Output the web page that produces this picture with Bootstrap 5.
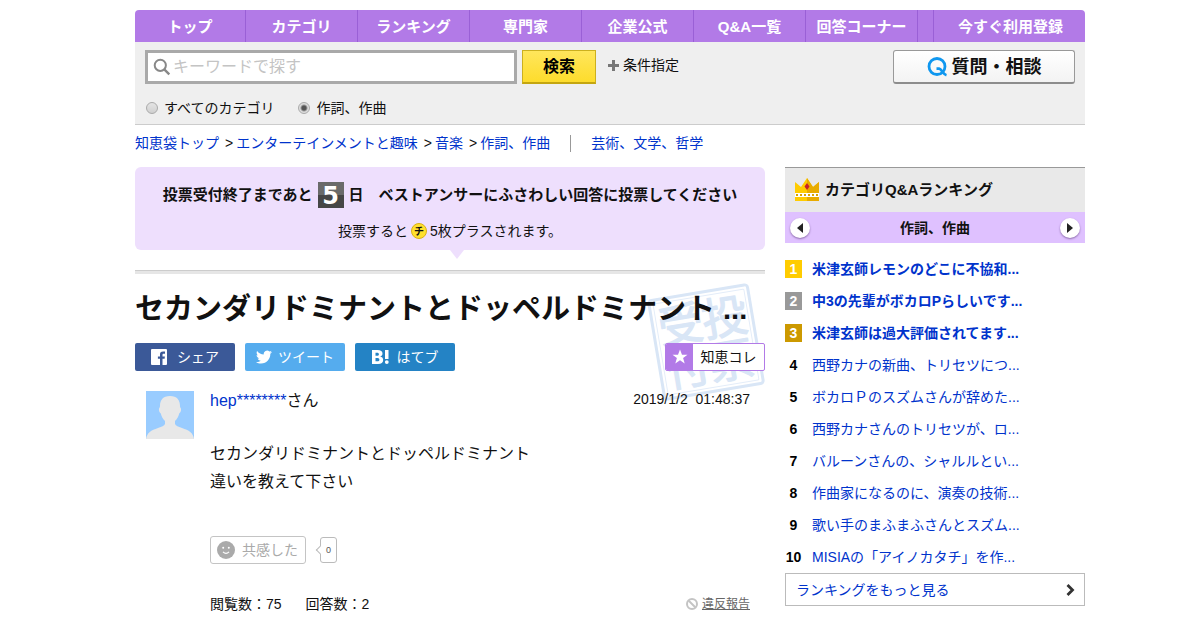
<!DOCTYPE html>
<html lang="ja">
<head>
<meta charset="utf-8">
<meta name="viewport" content="width=device-width, initial-scale=1">
<title>セカンダリドミナントとドッペルドミナント ... - 知恵袋</title>
<link href="https://cdn.jsdelivr.net/npm/bootstrap@5.3.0/dist/css/bootstrap.min.css" rel="stylesheet">
<style>
body{font-family:"Liberation Sans","Noto Sans CJK JP",sans-serif;font-size:14px;line-height:20px;color:#111;background:#fff;padding-left:20px}
a{color:#0033cc;text-decoration:none}
a:hover{text-decoration:underline}
.page-wrap{max-width:950px;padding-top:10px}
.top-nav{background:#b27ae7;border-radius:4px 4px 0 0;height:32px;font-size:15px;font-weight:700}
.top-nav a{color:#fff;line-height:34px;text-align:center;white-space:nowrap}
.nav-cell{flex:0 0 112px;border-right:1px solid #9a60d6}
.nav-cell:first-child{flex-basis:111px}
.nav-signup{flex:0 0 152px;border-left:1px solid #9a60d6;padding-left:2px}
.search-zone{background:#efefef;border-bottom:1px solid #ccc;padding:8px 10px;height:83px}
.search-box{flex:0 1 372px;height:34px;background:#fff;border:3px solid #a9a9a9;padding:0 5px}
.search-box svg{margin-right:2px}
.search-box input{border:0;outline:0;background:none;font-size:16px;line-height:24px;padding:0;min-width:0}
.search-box input::placeholder{color:#c4c4c4}
.btn-find{width:74px;height:34px;margin-left:5px;background:linear-gradient(#ffe65c,#fddc2c);border:1px solid #ccb01e;border-bottom:2px solid #c4a610;font-size:16px;font-weight:700;color:#000}
.btn-ask{width:182px;height:34px;background:linear-gradient(#fff,#f3f3f3);border:1px solid #999;border-bottom:2px solid #8c8c8c;border-radius:3px;font-size:18px;font-weight:700;color:#111;line-height:24px}
.scope{gap:24px;margin-top:14px;padding-left:1px}
.scope label{gap:6px}
.scope input{appearance:none;width:12px;height:12px;margin:0;border:1px solid #aaa;border-radius:50%;background:linear-gradient(#e4e4e4,#d0d0d0)}
.scope input:checked{background:radial-gradient(circle,#555 0 2px,#ddd 4px)}
.crumbs{padding:8px 0 14px}
.crumbs .sep{margin:0 3px 0 6px}
.crumbs .bar{width:1px;height:17px;background:#999;margin:0 20px}
.col-side{flex:0 0 300px}
.notice{background:#eedffd;border-radius:6px;height:83px;padding-top:15px}
.notice::after{content:"";position:absolute;left:50%;bottom:-9px;border:7px solid transparent;border-top:9px solid #eedffd;border-bottom:0}
.notice-main{font-size:15px;font-weight:700;height:26px;margin-bottom:13px}
.days{width:26px;height:26px;margin:0 5px;background:linear-gradient(#6a6a6a 50%,#464646 50%);color:#fff;font:700 24px/28px "DejaVu Sans",sans-serif;text-align:center}
.coin{width:16px;height:16px;margin:0 3px;border-radius:50%;background:#ffe02e;border:1px solid #d9b016;font-size:10px;line-height:15px;font-weight:700;text-align:center}
.question{border-top:1px solid #ccc;margin-top:20px}
.question::before{content:"";display:block;height:3px;background:#e6e6e6}
.stamp{position:absolute;right:0;top:11px}
.question h1{font-size:29px;line-height:40px;font-weight:700;margin:15px 0 14px;white-space:nowrap}
.share-btn{width:100px;height:28px;border-radius:2px;color:#fff;gap:10px}
.sh-f{background:#3b5998}.sh-t{background:#55acee;gap:6px}.sh-h{background:#2483c5;gap:8px}
.btn-kore{width:100px;height:28px;padding:0;border:1px solid #b27ae7;background:#fff;border-radius:2px;overflow:hidden;color:#111}
.btn-kore .star{width:27px;height:28px;background:#b27ae7}
.asker{padding:20px 15px 0 11px;gap:16px}
.user-name{font-size:16px}
.q-body{font-size:16px;line-height:28px;margin:29px 0 40px}
.btn-feel{width:96px;height:28px;border:1px solid #c4c4c4;border-radius:3px;background:#fff;color:#aaa;padding:0 6px;gap:7px}
.feel-count{width:17px;height:26px;margin-left:14px;border:1px solid #bbb;border-radius:3px;font-size:9px;color:#555}
.feel-count::before{content:"";position:absolute;left:-4px;top:9px;width:6px;height:6px;background:#fff;border:1px solid #bbb;border-width:0 0 1px 1px;transform:rotate(45deg)}
.stats{margin-top:30px}
.report{font-size:12px;color:#666;text-decoration:underline}
.rank-head{background:#e9e9e9;border-top:1px solid #999;height:45px;padding:0 9px;font-size:15px;line-height:20px;font-weight:700;gap:5px;margin:0}
.rank-cat{background:#dfc1ff;height:31px;padding:0 5px;font-weight:700}
.round-btn{width:20px;height:20px;padding:0;border:0;border-radius:50%;background:#fff;box-shadow:0 1px 2px #8a6aaa}
.rank-list{margin:10px 0 0}
.rank-list li{height:32px;gap:10px;white-space:nowrap}
.num{width:17px;height:18px;line-height:18px;text-align:center;font-weight:700;color:#000;flex:none}
.top3{font-weight:700}
.top3 .num{color:#fff}
.n1{background:#fc0}.n2{background:#999}.n3{background:#c90}
.more{border:1px solid #bbb;height:33px;padding:0 9px 0 10px}
</style>
</head>
<body>
<div class="page-wrap mx-auto">
  <nav class="top-nav d-flex">
    <a class="nav-cell" href="#">トップ</a>
    <a class="nav-cell" href="#">カテゴリ</a>
    <a class="nav-cell" href="#">ランキング</a>
    <a class="nav-cell" href="#">専門家</a>
    <a class="nav-cell" href="#">企業公式</a>
    <a class="nav-cell" href="#">Q&amp;A一覧</a>
    <a class="nav-cell" href="#">回答コーナー</a>
    <a class="nav-signup ms-auto" href="#">今すぐ利用登録</a>
  </nav>
  <form class="search-zone" onsubmit="return false">
    <div class="d-flex align-items-center">
      <label class="search-box d-flex align-items-center">
        <svg class="flex-shrink-0" width="18" height="18" viewBox="0 0 18 18" fill="none" stroke="#888"><circle cx="7.3" cy="7.3" r="5.6" stroke-width="2"/><path d="M11.3 11.3l5 5" stroke-width="2.4"/></svg>
        <input class="flex-grow-1" type="text" placeholder="キーワードで探す" aria-label="キーワード">
      </label>
      <button class="btn-find p-0" type="submit">検索</button>
      <a class="d-flex align-items-center text-reset ms-2 ps-1 pb-1" href="#"><svg class="me-1" width="11" height="11" viewBox="0 0 11 11"><path d="M4 0h3v4h4v3H7v4H4V7H0V4h4z" fill="#777"/></svg>条件指定</a>
      <button class="btn-ask ms-auto p-0 d-flex align-items-center justify-content-center" type="button"><svg class="me-1" width="21" height="20" viewBox="0 0 21 20" fill="none" stroke="#0f97ef"><circle cx="10" cy="9.500" r="8" stroke-width="2.800"/><path d="M9.500 11.600h2.500c3 .8 3.600 5.500 7.500 6.600" stroke-width="2.600"/></svg>質問・相談</button>
    </div>
    <div class="scope d-flex">
      <label class="d-flex align-items-center"><input type="radio" name="scope">すべてのカテゴリ</label>
      <label class="d-flex align-items-center"><input type="radio" name="scope" checked>作詞、作曲</label>
    </div>
  </form>
  <nav class="crumbs d-flex align-items-center">
    <a href="#">知恵袋トップ</a><span class="sep">&gt;</span><a href="#">エンターテインメントと趣味</a><span class="sep">&gt;</span><a href="#">音楽</a><span class="sep">&gt;</span><a href="#">作詞、作曲</a>
    <span class="bar"></span><a href="#">芸術、文学、哲学</a>
  </nav>
  <div class="d-flex" style="gap:20px">
    <main class="flex-grow-1">
      <section class="notice position-relative">
        <div class="notice-main d-flex justify-content-center align-items-center"><span>投票受付終了まであと</span><span class="days">5</span><span>日　ベストアンサーにふさわしい回答に投票してください</span></div>
        <div class="d-flex justify-content-center align-items-center"><span>投票すると</span><span class="coin">チ</span><span>5枚プラスされます。</span></div>
      </section>
      <article class="question position-relative">
        <svg class="stamp" width="120" height="120" viewBox="0 0 120 120">
          <g transform="rotate(-9.5 61 60)">
            <rect x="11" y="10" width="100" height="100" rx="3" fill="none" stroke="#d9e6f6" stroke-width="3"/>
            <rect x="15" y="14" width="92" height="92" rx="1" fill="none" stroke="#e4edf9" stroke-width="1"/>
            <g fill="#d9e6f6" stroke="#d9e6f6" stroke-width="1.200" stroke-linejoin="round" font-size="45" text-anchor="middle">
              <text x="39" y="55">受</text><text x="83" y="55">投</text><text x="39" y="99">付</text><text x="83" y="99">票</text>
            </g>
          </g>
        </svg>
        <h1 class="position-relative">セカンダリドミナントとドッペルドミナント ...</h1>
        <div class="d-flex position-relative" style="gap:10px">
          <a class="share-btn sh-f d-flex align-items-center justify-content-center" href="#"><svg width="16" height="16" viewBox="0 0 16 16"><path fill="#fff" d="M1 0h14q1 0 1 1v14q0 1-1 1h-3.500V9.800h2.100l.3-2.400h-2.400V5.900c0-.7.2-1.200 1.200-1.200H14V2.500l-1.900-.1C9.800 2.400 9 3.600 9 5.600v1.800H6.900v2.400H9V16H1q-1 0-1-1V1q0-1 1-1z"/></svg>シェア</a>
          <a class="share-btn sh-t d-flex align-items-center justify-content-center" href="#"><svg width="16" height="14" viewBox="0 0 16 13"><path fill="#fff" d="M5 13c6 0 9.300-5 9.300-9.300V3.300c.7-.5 1.200-1 1.700-1.700-.6.300-1.200.400-1.900.5.700-.4 1.200-1 1.400-1.800-.6.400-1.300.600-2.100.8A3.300 3.300 0 0 0 7.800 4.100C5.100 4 2.700 2.700 1.100.6.200 2.100.700 4 2.100 5c-.5 0-1-.2-1.500-.4 0 1.600 1.100 2.900 2.600 3.200-.5.200-1 .2-1.500.1.400 1.300 1.600 2.200 3.100 2.300C3.500 11.200 1.900 11.700 0 11.500 1.500 12.500 3.200 13 5 13z"/></svg>ツイート</a>
          <a class="share-btn sh-h d-flex align-items-center justify-content-center" href="#"><svg width="17" height="14" viewBox="0 0 17 14" fill="#fff"><path fill-rule="evenodd" d="M0 0h5.500c3.300 0 5 1.200 5 3.600 0 1.700-1 2.700-2.500 3 2 .3 3.200 1.500 3.200 3.500C11.200 12.700 9.300 14 6 14H0zM3.500 2.700v3h1.300c1.400 0 2.100-.5 2.100-1.500s-.7-1.500-2-1.500zM3.500 8v3.300h1.600c1.500 0 2.300-.5 2.300-1.600S6.600 8 5.100 8z"/><path d="M13 0h3.500v9H13z"/><circle cx="14.800" cy="12.100" r="1.900"/></svg>はてブ</a>
          <button class="btn-kore d-flex align-items-center ms-auto" type="button"><span class="star d-flex align-items-center justify-content-center"><svg width="16" height="16" viewBox="0 0 16 16"><path fill="#fff" d="M8 .5l2 5.200h5.500l-4.400 3.400 1.600 5.400L8 11.300l-4.700 3.200 1.600-5.400L.5 5.700H6z"/></svg></span><span class="flex-grow-1 text-center">知恵コレ</span></button>
        </div>
        <div class="asker d-flex position-relative">
          <svg class="flex-shrink-0" width="48" height="48" viewBox="0 0 48 48"><path fill="#9cf" d="M0 0h48v48H0z"/><path fill="#e8e8e8" d="M24 5c7 0 10 4 10 10 0 2 1.500 2 1 4.500-.4 2-1.300 2.500-1.800 3-.7 3-2.200 5.500-4.200 7.500v3c1 2 3 2.500 7 4 7 2.500 11 4.500 12 11H0c1-6.500 5-8.500 12-11 4-1.500 6-2 7-4v-3c-2-2-3.500-4.500-4.200-7.500-.5-.5-1.400-1-1.800-3-.5-2.500 1-2.500 1-4.500C14 9 17 5 24 5z"/></svg>
          <div class="flex-grow-1">
            <div class="d-flex justify-content-between">
              <span class="user-name"><a href="#">hep********</a>さん</span>
              <time style="line-height:16px">2019/1/2&nbsp; 01:48:37</time>
            </div>
            <p class="q-body">セカンダリドミナントとドッペルドミナント<br>違いを教えて下さい</p>
            <div class="d-flex align-items-center">
              <button class="btn-feel d-flex align-items-center" type="button"><svg width="18" height="18" viewBox="0 0 18 18"><circle cx="9" cy="9" r="9" fill="#aaa"/><path d="M6 10.800q3 3 6 0" fill="none" stroke="#fff" stroke-width="1.200"/><circle cx="6.200" cy="6.800" r="1" fill="#fff"/><circle cx="11.800" cy="6.800" r="1" fill="#fff"/></svg>共感した</button>
              <span class="feel-count position-relative d-flex align-items-center justify-content-center">0</span>
            </div>
            <div class="stats d-flex align-items-center">
              <span class="me-4">閲覧数：75</span><span>回答数：2</span>
              <span class="ms-auto d-flex align-items-center"><svg class="me-1" width="12" height="12" viewBox="0 0 12 12" fill="none" stroke="#c4c4c4" stroke-width="2"><circle cx="6" cy="6" r="5"/><path d="M2.500 2.500l7 7"/></svg><a class="report" href="#">違反報告</a></span>
            </div>
          </div>
        </div>
      </article>
    </main>
    <aside class="col-side">
      <h2 class="rank-head d-flex align-items-center"><svg width="26" height="26" viewBox="0 0 26 26"><path fill="#fc0" d="M1 5l6 5 6-9 6 9 6-5v19H1z"/><path fill="#e8ab00" d="M13 1l6 9 6-5v19H13z"/><path fill="#fff" d="M1 16h24v4H1z"/><path stroke="#d9a300" stroke-width="2" stroke-dasharray="2 2" d="M2 18h22"/><path fill="#c8202a" d="M13 6l2.500 3.500L13 13l-2.500-3.500z"/></svg>カテゴリQ&amp;Aランキング</h2>
      <div class="rank-cat d-flex align-items-center justify-content-between">
        <button class="round-btn d-flex align-items-center justify-content-center" type="button" aria-label="前へ"><svg width="6" height="10"><path d="M6 0v10L0 5z" fill="#222"/></svg></button>
        <span>作詞、作曲</span>
        <button class="round-btn d-flex align-items-center justify-content-center" type="button" aria-label="次へ"><svg width="6" height="10"><path d="M0 0v10l6-5z" fill="#222"/></svg></button>
      </div>
      <ol class="rank-list list-unstyled">
        <li class="top3 d-flex align-items-center"><span class="num n1">1</span><a href="#">米津玄師レモンのどこに不協和...</a></li>
        <li class="top3 d-flex align-items-center"><span class="num n2">2</span><a href="#">中3の先輩がボカロPらしいです...</a></li>
        <li class="top3 d-flex align-items-center"><span class="num n3">3</span><a href="#">米津玄師は過大評価されてます...</a></li>
        <li class="d-flex align-items-center"><span class="num">4</span><a href="#">西野カナの新曲、トリセツにつ...</a></li>
        <li class="d-flex align-items-center"><span class="num">5</span><a href="#">ボカロＰのスズムさんが辞めた...</a></li>
        <li class="d-flex align-items-center"><span class="num">6</span><a href="#">西野カナさんのトリセツが、ロ...</a></li>
        <li class="d-flex align-items-center"><span class="num">7</span><a href="#">バルーンさんの、シャルルとい...</a></li>
        <li class="d-flex align-items-center"><span class="num">8</span><a href="#">作曲家になるのに、演奏の技術...</a></li>
        <li class="d-flex align-items-center"><span class="num">9</span><a href="#">歌い手のまふまふさんとスズム...</a></li>
        <li class="d-flex align-items-center"><span class="num">10</span><a href="#">MISIAの「アイノカタチ」を作...</a></li>
      </ol>
      <a class="more d-flex align-items-center justify-content-between" href="#">ランキングをもっと見る<svg width="9" height="12" viewBox="0 0 9 12"><path d="M1.500 1l5 5-5 5" fill="none" stroke="#333" stroke-width="2.800"/></svg></a>
    </aside>
  </div>
</div>
<script src="https://cdn.jsdelivr.net/npm/bootstrap@5.3.0/dist/js/bootstrap.bundle.min.js"></script>
</body>
</html>
